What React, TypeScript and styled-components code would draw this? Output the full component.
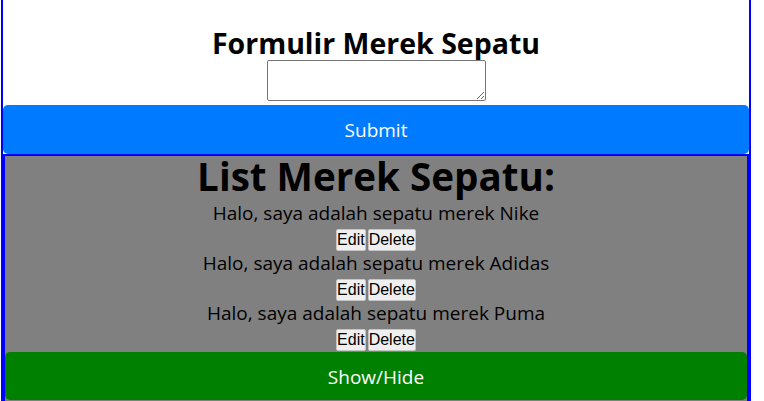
import React, { useState } from "react";
import styled, { createGlobalStyle } from "styled-components";

const FONT = `"Open Sans", "Noto Sans", sans-serif`;

const GlobalStyle = createGlobalStyle`
  html, body {
    margin: 0;
    padding: 0;
    background: #ffffff;
  }
  body {
    font-family: ${FONT};
    font-size: 19px;
    color: #000000;
    overflow: hidden;
  }
`;

const Page = styled.div`
  box-sizing: border-box;
  width: 750px;
  margin-left: 1px;
  border-left: 2px solid #0000ff;
  border-right: 2px solid #0000ff;
  border-bottom: 2px solid #0000ff;
  display: flex;
  flex-direction: column;
  align-items: center;
  text-align: center;
`;

const FormTitle = styled.h2`
  margin: 26px 0 0;
  font-size: 28.5px;
  line-height: 34px;
  font-weight: 700;
`;

const BrandInput = styled.textarea`
  box-sizing: border-box;
  width: 219px;
  height: 41px;
  margin: 0;
  border: 1px solid #767676;
  border-radius: 2px;
  background: #ffffff;
  font-family: "Liberation Mono", monospace;
  font-size: 13px;
`;

const ActionButton = styled.button<{ $bg: string }>`
  box-sizing: border-box;
  width: 100%;
  height: 48px;
  border: none;
  border-radius: 5px;
  background: ${(p) => p.$bg};
  color: #ffffff;
  font-family: ${FONT};
  font-size: 19px;
  cursor: pointer;
  flex-shrink: 0;
`;

const SubmitButton = styled(ActionButton)`
  margin-top: 4px;
  height: 49px;
`;

const ToggleButton = styled(ActionButton)`
  padding-top: 2px;
`;

const ListPanel = styled.div`
  box-sizing: border-box;
  width: 100%;
  border: 2px solid #0000ff;
  background: #808080;
  display: flex;
  flex-direction: column;
  align-items: center;
  padding-bottom: 20px;
`;

const ListTitle = styled.h1`
  margin: 0 0 6px;
  font-size: 38.6px;
  line-height: 40px;
  font-weight: 700;
`;

const ItemText = styled.div`
  line-height: 23px;
  height: 23px;
`;

const ButtonRow = styled.div`
  height: 27px;
  display: flex;
  gap: 2px;
  align-items: flex-start;
  padding-top: 4px;
  box-sizing: border-box;
`;

const SmallButton = styled.button`
  box-sizing: border-box;
  height: 22px;
  margin: 0;
  padding: 1px 0;
  border: 1px solid #c4c4c4;
  border-radius: 2px;
  background: #efefef;
  color: #000000;
  font-family: "Liberation Sans", Arial, sans-serif;
  font-size: 16px;
  line-height: 18px;
  cursor: pointer;
`;

const brands = ["Nike", "Adidas", "Puma"];

export default function App() {
  const [value, setValue] = useState("");
  const [show, setShow] = useState(true);
  return (
    <>
      <GlobalStyle />
      <Page>
        <FormTitle>Formulir Merek Sepatu</FormTitle>
        <BrandInput value={value} onChange={(e) => setValue(e.target.value)} />
        <SubmitButton $bg="#007bff">Submit</SubmitButton>
        <ListPanel>
          <ListTitle>List Merek Sepatu:</ListTitle>
          {show &&
            brands.map((b) => (
              <React.Fragment key={b}>
                <ItemText>Halo, saya adalah sepatu merek {b}</ItemText>
                <ButtonRow>
                  <SmallButton>Edit</SmallButton>
                  <SmallButton>Delete</SmallButton>
                </ButtonRow>
              </React.Fragment>
            ))}
          <ToggleButton $bg="#008000" onClick={() => setShow(!show)}>
            Show/Hide
          </ToggleButton>
        </ListPanel>
      </Page>
    </>
  );
}
